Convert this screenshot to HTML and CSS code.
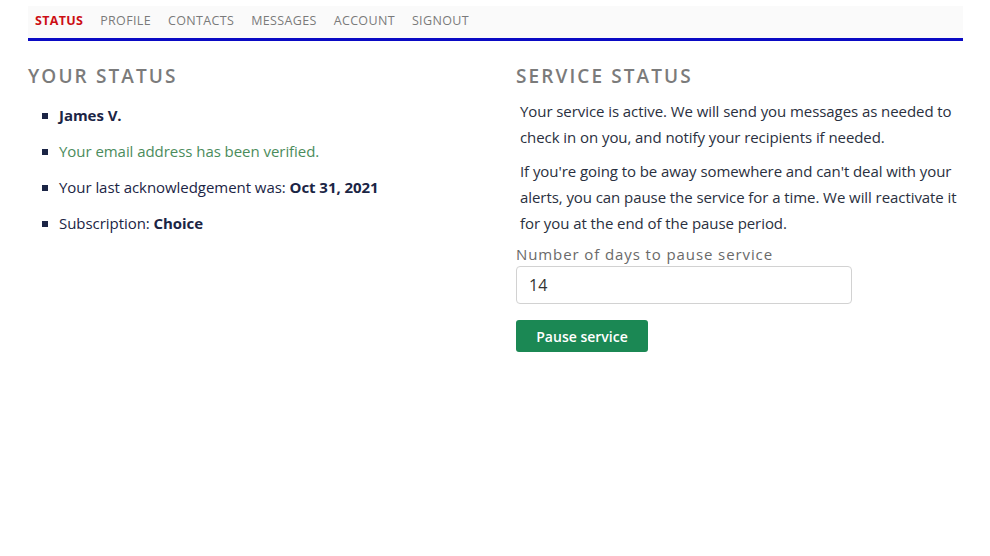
FILE: index.html
```html
<!DOCTYPE html>
<html>

<head>
  <meta charset="utf-8">
  <link rel="stylesheet" href="styles.css">
</head>

<body>

  <div class="container">
    <nav class="topnav">
      <a href="#" class="active">Status</a>
      <a href="#">Profile</a>
      <a href="#">Contacts</a>
      <a href="#">Messages</a>
      <a href="#">Account</a>
      <a href="#">Signout</a>
    </nav>

    <div class="columns">
      <section class="col-left">
        <h2>Your Status</h2>
        <ul class="status-list">
          <li><b>James V.</b></li>
          <li class="verified">Your email address has been verified.</li>
          <li>Your last acknowledgement was: <b>Oct 31, 2021</b></li>
          <li>Subscription: <b>Choice</b></li>
        </ul>
      </section>

      <section class="col-right">
        <h2>Service Status</h2>
        <p>Your service is active. We will send you messages as needed to check in on you, and notify your recipients if needed.</p>
        <p>If you're going to be away somewhere and can't deal with your alerts, you can pause the service for a time. We will reactivate it for you at the end of the pause period.</p>
        <form class="pause-form">
          <label for="days">Number of days to pause service</label>
          <input type="text" id="days" value="14">
          <button type="button">Pause service</button>
        </form>
      </section>
    </div>
  </div>

</body>

</html>
```

FILE: styles.css
```css
body {
  margin: 0;
  padding: 6px 27px 0 28px;
  font-family: "Open Sans", sans-serif;
  color: #1b2545;
  background-color: #fff;
}

.container {
  width: 935px;
}

/*********** Nav ***********/
.topnav {
  display: flex;
  gap: 17px;
  height: 28px;
  padding: 0 0 4px 7px;
  background-color: #fafafa;
  border-bottom: 3px solid #0a0ac4;
  align-items: center;
}

.topnav a {
  font-size: 12.5px;
  letter-spacing: 0.35px;
  text-transform: uppercase;
  text-decoration: none;
  color: #7a7a7a;
}

.topnav a.active {
  color: #cc0f14;
  font-weight: 700;
  letter-spacing: 0.3px;
}

/*********** Columns ***********/
.columns {
  display: grid;
  grid-template-columns: 488px 1fr;
}

h2 {
  margin: 23px 0 0 0;
  font-size: 19px;
  font-weight: 600;
  letter-spacing: 2.1px;
  text-transform: uppercase;
  color: #7b7b7b;
  line-height: 24px;
}

.status-list {
  list-style: none;
  margin: 17px 0 0 0;
  padding: 0 0 0 14px;
}

.status-list li {
  position: relative;
  padding-left: 17px;
  font-size: 15px;
  letter-spacing: -0.05px;
  line-height: 20px;
  margin-bottom: 16px;
}

.status-list li::before {
  content: "";
  position: absolute;
  left: 0;
  top: 8px;
  width: 6px;
  height: 6px;
  background-color: #1b2545;
}

.status-list b {
  font-weight: 700;
}

.status-list .verified {
  color: #4b8c5c;
}

.col-right p {
  margin: 8px 0 0 4px;
  font-size: 15px;
  letter-spacing: -0.07px;
  line-height: 26px;
  color: #2a3040;
}

.col-right h2 + p {
  margin-top: 10px;
}

/*********** Form ***********/
.pause-form {
  display: flex;
  flex-direction: column;
  align-items: flex-start;
  margin-top: 8px;
}

.pause-form label {
  font-size: 15px;
  letter-spacing: 0.9px;
  color: #6a6a6a;
  line-height: 20px;
}

.pause-form input {
  box-sizing: border-box;
  width: 336px;
  height: 38px;
  margin-top: 2px;
  padding: 0 12px;
  font-family: "Open Sans", sans-serif;
  font-size: 16px;
  color: #333;
  border: 1px solid #d2d2d2;
  border-radius: 4px;
}

.pause-form button {
  margin-top: 16px;
  width: 132px;
  height: 32px;
  font-family: "Open Sans", sans-serif;
  font-size: 14px;
  font-weight: 600;
  color: #fff;
  background-color: #1b8854;
  border: none;
  border-radius: 3px;
}
```
